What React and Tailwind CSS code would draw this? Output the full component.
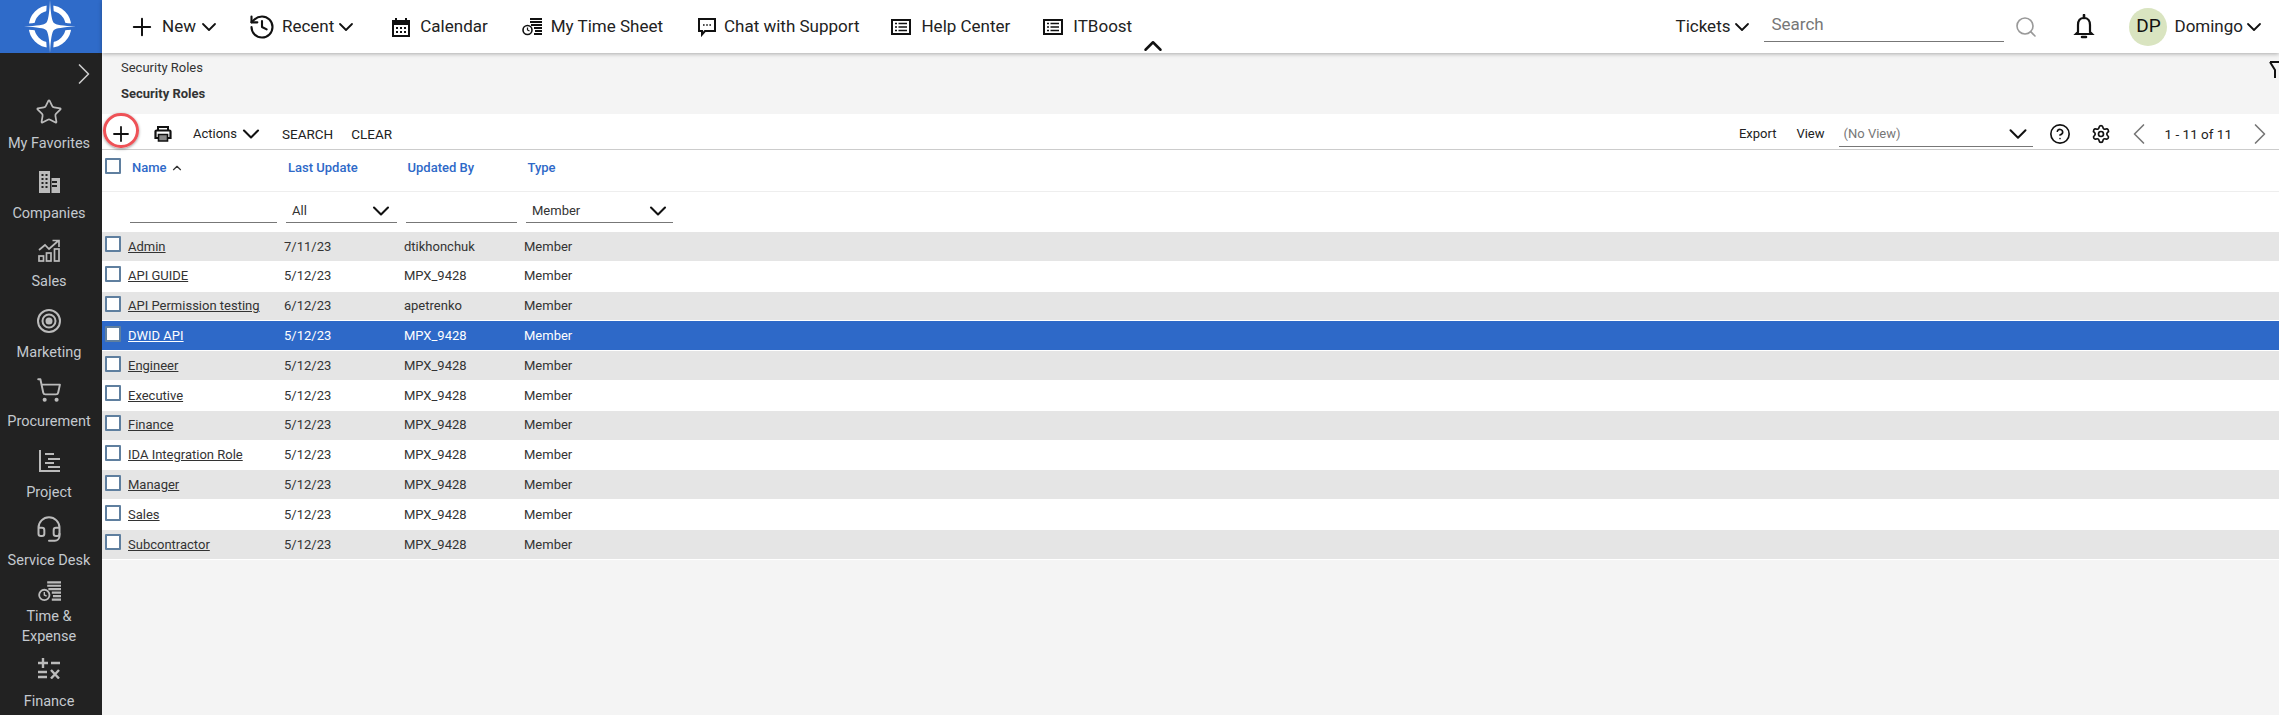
import { ChevronDown, ChevronLeft, ChevronRight, ChevronUp, Plus, Star, ShoppingCart, Headset, Search, Settings, CircleHelp, History } from 'lucide-react';

const FONT = "font-['Roboto',sans-serif]";

function Logo() {
  return (
    <svg width="62" height="53" viewBox="0 0 62 53" className="-ml-[3px]">
      <circle cx="31" cy="26.500" r="18.500" fill="none" stroke="#fff" strokeWidth="5.500" />
      <path
        d="M31 0 Q32 21 35 23 Q37 25.500 57 26.500 Q37 27.500 35 30 Q32 32 31 53 Q30 32 27 30 Q25 27.500 5 26.500 Q25 25.500 27 23 Q30 21 31 0 Z"
        fill="#fff"
        stroke="#2f6bc9"
        strokeWidth="6"
        paintOrder="stroke"
      />
    </svg>
  );
}

function ListIcon() {
  return (
    <svg width="20" height="16" viewBox="0 0 20 16">
      <rect x="1" y="1" width="18" height="14" fill="none" stroke="#111" strokeWidth="2" />
      <path d="M4 4.500h2M4 8h2M4 11.500h2M7.500 4.500h8.500M7.500 8h8.500M7.500 11.500h8.500" stroke="#111" strokeWidth="1.500" />
    </svg>
  );
}

function CalendarIcon() {
  return (
    <svg width="20" height="20" viewBox="0 0 20 20" fill="#111">
      <path d="M1 3h3V1h2v2h8V1h2v2h3v17H1z" />
      <path d="M3 8h14v10H3z" fill="#fff" />
      <path d="M5 10h2v2H5zM9 10h2v2H9zM13 10h2v2h-2zM5 14h2v2H5zM9 14h2v2H9zM13 14h2v2h-2z" />
    </svg>
  );
}

function ChatIcon() {
  return (
    <svg width="20" height="20" viewBox="0 0 20 20" fill="none" stroke="#111" strokeWidth="2">
      <path d="M2 2h16v12H8l-3 3.500V14H2z" />
      <path d="M6 8h1.600M9.200 8h1.600M12.400 8H14" strokeWidth="1.600" />
    </svg>
  );
}

function BellIcon() {
  return (
    <svg width="26" height="26" viewBox="0 0 26 26" fill="none" stroke="#111" strokeWidth="2.200">
      <path d="M13 4c-4 0-6 3-6 7v7l-2 2h16l-2-2v-7c0-4-2-7-6-7z" />
      <path d="M13 1v3M11 23h4" strokeLinecap="round" strokeWidth="2.600" />
    </svg>
  );
}

function PrinterIcon() {
  return (
    <svg width="18" height="16" viewBox="0 0 18 16" fill="none" stroke="#111" strokeWidth="2" className="ml-[15px]">
      <path d="M4 4V1h10v3" />
      <path d="M4 12H1.500V5.500a1 1 0 0 1 1-1h13a1 1 0 0 1 1 1V12H14" strokeWidth="2.200" />
      <path d="M4.500 8.500h9V15h-9z" fill="#888" strokeWidth="1.600" />
    </svg>
  );
}

function TimeSheetIcon({ color = '#111', w = 20, h = 18 }) {
  return (
    <svg width={w} height={h} viewBox="0 0 20 18" fill="none" stroke={color}>
      <path d="M8 1h12M8 4h12M9 7h11M12 10h8M13 13h7M12 16h8" strokeWidth="1.900" />
      <circle cx="5.500" cy="12" r="4.500" strokeWidth="1.600" />
      <path d="M5.500 9.500V12l2 1" strokeWidth="1.200" />
    </svg>
  );
}

function CompaniesIcon() {
  return (
    <svg width="22" height="22" viewBox="0 0 22 22" fill="#bbb">
      <path d="M1 0h11v7h10v15H1z" />
      <path d="M3.500 3h2v2h-2zM7.500 3h2v2h-2zM3.500 7h2v2h-2zM7.500 7h2v2h-2zM3.500 11h2v2h-2zM7.500 11h2v2h-2zM3.500 15h2v2h-2zM7.500 15h2v2h-2zM14 10h5v2h-5zM14 14h5v2h-5z" fill="#222" />
      <path d="M12 7h1.500v15H12z" fill="#222" />
    </svg>
  );
}

function SalesIcon() {
  return (
    <svg width="22" height="23" viewBox="0 0 22 23" fill="none" stroke="#bbb" strokeWidth="1.700">
      <path d="M1 11l6-5 4 4 9-8M14.500 1.500H21V8" />
      <rect x="1" y="17" width="4.500" height="5" />
      <rect x="8.500" y="14" width="4.500" height="8" />
      <rect x="16.500" y="10" width="4.500" height="12" />
    </svg>
  );
}

function TargetIcon() {
  return (
    <svg width="24" height="24" viewBox="0 0 24 24" fill="none" stroke="#bbb" strokeWidth="2">
      <circle cx="12" cy="12" r="11" />
      <circle cx="12" cy="12" r="6.500" />
      <circle cx="12" cy="12" r="2.500" fill="#bbb" />
    </svg>
  );
}

function ProjectIcon() {
  return (
    <svg width="21" height="22" viewBox="0 0 21 22" fill="none" stroke="#bbb" strokeWidth="2">
      <path d="M1 0v21h20" />
      <path d="M6 4h9M9 9h12M6 13h9M9 17h12" />
    </svg>
  );
}

function FinanceIcon() {
  return (
    <svg width="22" height="21" viewBox="0 0 22 21" fill="none" stroke="#bbb" strokeWidth="2.400">
      <path d="M0 5h10M5 0v10M13 5h9M0 14h9M0 19h9M13 12l8 8.500M21 12l-8 8.500" />
    </svg>
  );
}

const sideItems = [
  { label: 'My Favorites', icon: <Star size={28} strokeWidth={1.5} color="#bbb" />, h: 'h-[70px]', mt: 'mt-[7px] w-full' },
  { label: 'Companies', icon: <CompaniesIcon />, h: 'h-[68px]', mt: 'mt-[7px] w-full' },
  { label: 'Sales', icon: <SalesIcon />, h: 'h-[71px]', mt: 'mt-[7px] w-full' },
  { label: 'Marketing', icon: <TargetIcon />, h: 'h-[69px]', mt: 'mt-[7px] w-full' },
  { label: 'Procurement', icon: <ShoppingCart size={26} strokeWidth={1.8} color="#bbb" />, h: 'h-[71px]', mt: 'mt-[7px] w-full' },
  { label: 'Project', icon: <ProjectIcon />, h: 'h-[68px]', mt: 'mt-[7px] w-full' },
  { label: 'Service Desk', icon: <Headset size={28} strokeWidth={1.7} color="#bbb" />, h: 'h-[62px]', mt: 'mt-[7px] w-full' },
  { label: 'Time & Expense', icon: <TimeSheetIcon color="#bbb" w={23} h={21} />, h: 'h-[77px]', mt: 'mt-[1px] w-[70px]' },
  { label: 'Finance', icon: <FinanceIcon />, h: 'h-[56px]', mt: 'mt-[9px] w-full' },
];

const navItems = [
  { label: 'Calendar', icon: <CalendarIcon />, ml: 'ml-[33px]', gap: 'gap-[9px]' },
  { label: 'My Time Sheet', icon: <TimeSheetIcon />, ml: 'ml-[34px]', gap: 'gap-[9px]' },
  { label: 'Chat with Support', icon: <ChatIcon />, ml: 'ml-[34px]', gap: 'gap-[7px]' },
  { label: 'Help Center', icon: <ListIcon />, ml: 'ml-[32px]', gap: 'gap-[10px]' },
  { label: 'ITBoost', icon: <ListIcon />, ml: 'ml-[33px]', gap: 'gap-[10px]' },
];

const rows = [
  ['Admin', '7/11/23', 'dtikhonchuk'],
  ['API GUIDE', '5/12/23', 'MPX_9428'],
  ['API Permission testing', '6/12/23', 'apetrenko'],
  ['DWID API', '5/12/23', 'MPX_9428'],
  ['Engineer', '5/12/23', 'MPX_9428'],
  ['Executive', '5/12/23', 'MPX_9428'],
  ['Finance', '5/12/23', 'MPX_9428'],
  ['IDA Integration Role', '5/12/23', 'MPX_9428'],
  ['Manager', '5/12/23', 'MPX_9428'],
  ['Sales', '5/12/23', 'MPX_9428'],
  ['Subcontractor', '5/12/23', 'MPX_9428'],
];

function Checkbox() {
  return <span className="block h-[16px] w-[16px] shrink-0 rounded-[1px] border-2 border-[#5f7f9f] bg-white" />;
}

function Row({ row, index }) {
  const selected = index === 3;
  const bg = selected ? 'bg-[#2e69c8] text-white' : index % 2 === 0 ? 'bg-[#e5e5e5] text-[#333]' : 'bg-white text-[#333]';
  return (
    <div className={`flex h-[29.8px] items-center border-b border-white text-[13px] ${bg}`}>
      <div className="flex w-[182px] items-center pl-[3px]">
        <span className="mb-[4px]"><Checkbox /></span>
        <a className="ml-[7px] underline">{row[0]}</a>
      </div>
      <div className="w-[120px]">{row[1]}</div>
      <div className="w-[120px]">{row[2]}</div>
      <div>Member</div>
    </div>
  );
}

export default function App() {
  return (
    <div className={`flex h-[715px] w-[2279px] overflow-hidden bg-[#f4f4f4] ${FONT}`}>
      <aside className="flex w-[102px] shrink-0 flex-col bg-[#222]">
        <div className="flex h-[53px] shrink-0 items-center justify-center bg-[#2f6bc9]">
          <Logo />
        </div>
        <div className="flex h-[42px] shrink-0 items-center justify-end">
          <ChevronRight size={36} strokeWidth={1.1} color="#ccc" />
        </div>
        {sideItems.map((item) => (
          <div key={item.label} className={`flex ${item.h} shrink-0 flex-col items-center pr-[4px] pt-[2px] text-center text-[14.5px] leading-[20px] text-[#c4c9cf]`}>
            <div className="flex h-[30px] shrink-0 items-center">{item.icon}</div>
            <div className={item.mt}>{item.label}</div>
          </div>
        ))}
      </aside>

      <main className="flex min-w-0 flex-1 flex-col">
        <header className="relative z-10 flex h-[53px] shrink-0 items-center bg-white pl-[26px] pr-[13px] text-[17px] text-[#222] shadow-[0_1px_4px_rgba(0,0,0,0.3)]">
          <Plus size={28} strokeWidth={1.7} color="#111" />
          <span className="ml-[6px]">New</span>
          <ChevronDown size={24} strokeWidth={1.8} color="#111" className="ml-[1px]" />
          <History size={28} strokeWidth={1.8} color="#111" className="ml-[27px]" />
          <span className="ml-[6px]">Recent</span>
          <ChevronDown size={24} strokeWidth={1.8} color="#111" />
          {navItems.map((item) => (
            <div key={item.label} className={`flex items-center ${item.gap} ${item.ml}`}>
              {item.icon}
              <span>{item.label}</span>
            </div>
          ))}
          <ChevronUp size={30} strokeWidth={2} color="#111" className="absolute left-[1036px] top-[31px]" />
          <div className="ml-auto flex items-center">
            <span>Tickets</span>
            <ChevronDown size={24} strokeWidth={1.8} color="#111" />
            <div className="ml-[10px] flex h-[30px] w-[240px] items-center border-b border-[#777] pb-[2px] pl-[7px] text-[#777]">Search</div>
            <Search size={24} strokeWidth={1.6} color="#999" className="ml-[10px]" />
            <span className="ml-[33px]"><BellIcon /></span>
            <div className="ml-[32px] flex h-[38px] w-[38px] items-center justify-center rounded-full bg-[#d9e4c0] text-[19px] text-[#111]">DP</div>
            <span className="ml-[7px]">Domingo</span>
            <ChevronDown size={24} strokeWidth={1.8} color="#111" className="-ml-[1px]" />
          </div>
        </header>

        <div className="relative h-[61px] shrink-0 overflow-hidden pl-[19px] text-[13px] text-[#333]">
          <div className="pt-[5px]">Security Roles</div>
          <div className="mt-[6.500px] font-bold">Security Roles</div>
          <svg width="10" height="20" viewBox="0 0 10 20" fill="none" stroke="#111" strokeWidth="2" className="absolute left-[2167px] top-[7px]">
            <path d="M1 2h12M1 2l5 8v8" />
          </svg>
        </div>

        <div className="flex h-[36px] shrink-0 items-center border-b border-[#ccc] bg-white pt-[5px] text-[13px] text-[#222]">
          <div className="relative z-10 ml-[1px] -mt-[8px] flex h-[35px] w-[36px] items-center justify-center rounded-full border-[3px] border-[#ee5257] pt-[7px] shadow-[0_1px_3px_rgba(0,0,0,0.4)]">
            <Plus size={24} strokeWidth={1.8} color="#111" />
          </div>
          <PrinterIcon />
          <span className="ml-[21px]">Actions</span>
          <ChevronDown size={28} strokeWidth={1.8} color="#111" />
          <span className="ml-[17px] text-[13.5px]">SEARCH</span>
          <span className="ml-[18px] text-[13.5px]">CLEAR</span>
          <div className="ml-auto flex items-center pr-[1px]">
            <span>Export</span>
            <span className="ml-[20px]">View</span>
            <div className="ml-[14px] flex h-[26px] w-[194px] items-center justify-between border-b border-[#777] pl-[5px] text-[#777]">
              (No View)
              <ChevronDown size={30} strokeWidth={1.6} color="#111" />
            </div>
            <CircleHelp size={22} strokeWidth={1.8} color="#111" className="ml-[16px]" />
            <Settings size={20} strokeWidth={2} color="#111" className="ml-[20px]" />
            <ChevronLeft size={36} strokeWidth={1.1} color="#777" className="ml-[10px]" />
            <span className="ml-[8px] text-[13.5px]">1 - 11 of 11</span>
            <ChevronRight size={36} strokeWidth={1.1} color="#777" className="ml-[10px]" />
          </div>
        </div>

        <div className="flex h-[42px] shrink-0 items-start border-b border-[#eee] bg-white pl-[3px] pt-[8px] text-[13px] font-medium text-[#2e69c8]">
          <Checkbox />
          <div className="ml-[11px] flex w-[156px] items-center gap-[3px]">Name <ChevronUp size={14} color="#333" /></div>
          <div className="w-[119.5px]">Last Update</div>
          <div className="w-[120px]">Updated By</div>
          <div>Type</div>
        </div>

        <div className="flex h-[40px] shrink-0 items-end bg-white pb-[9px] text-[13px] text-[#333]">
          <div className="ml-[28px] h-[20px] w-[147px] border-b border-[#777]" />
          <div className="ml-[9px] flex h-[26px] w-[111px] items-center justify-between border-b border-[#777] pl-[6px] pt-[2px]">All <ChevronDown size={28} strokeWidth={1.8} color="#111" className="mr-[2px]" /></div>
          <div className="ml-[9px] h-[20px] w-[111px] border-b border-[#777]" />
          <div className="ml-[9px] flex h-[26px] w-[147px] items-center justify-between border-b border-[#777] pl-[6px] pt-[2px]">Member <ChevronDown size={28} strokeWidth={1.8} color="#111" className="mr-[1px]" /></div>
        </div>

        {rows.map((row, i) => (
          <Row key={row[0]} row={row} index={i} />
        ))}
      </main>
    </div>
  );
}
